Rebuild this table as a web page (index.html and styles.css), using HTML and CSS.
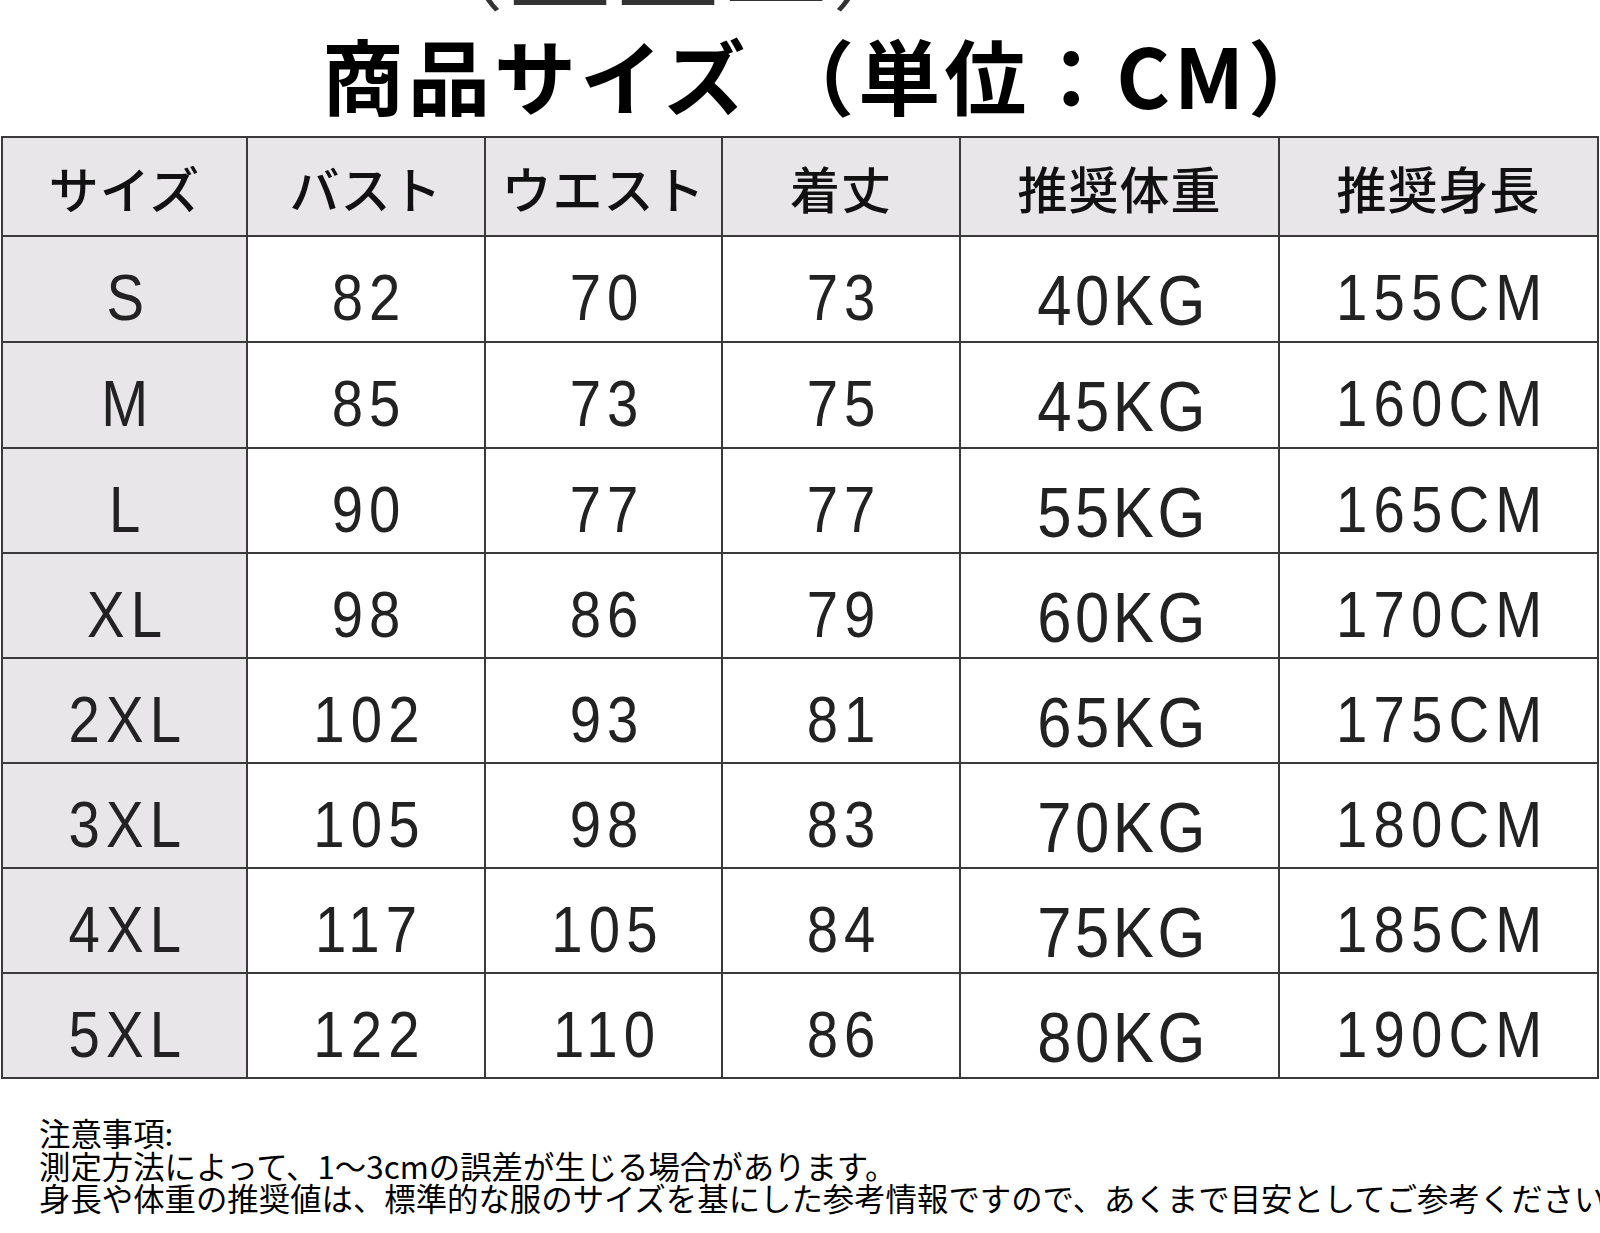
FILE: index.html
```html
<!DOCTYPE html>
<html lang="ja">
<head>
<meta charset="utf-8">
<title>商品サイズ</title>
<link rel="stylesheet" href="styles.css">
</head>
<body>
<div class="page">
  <div class="fragment"><span>（正上工）</span></div>
  <h1 class="title">商品サイズ （単位：CM）</h1>
  <div class="chart">
    <div class="cell head">サイズ</div>
    <div class="cell head">バスト</div>
    <div class="cell head">ウエスト</div>
    <div class="cell head">着丈</div>
    <div class="cell head">推奨体重</div>
    <div class="cell head">推奨身長</div>

    <div class="cell size"><span class="num">S</span></div>
    <div class="cell"><span class="num">82</span></div>
    <div class="cell"><span class="num">70</span></div>
    <div class="cell"><span class="num">73</span></div>
    <div class="cell"><span class="num kg">40KG</span></div>
    <div class="cell"><span class="num">155CM</span></div>

    <div class="cell size"><span class="num">M</span></div>
    <div class="cell"><span class="num">85</span></div>
    <div class="cell"><span class="num">73</span></div>
    <div class="cell"><span class="num">75</span></div>
    <div class="cell"><span class="num kg">45KG</span></div>
    <div class="cell"><span class="num">160CM</span></div>

    <div class="cell size"><span class="num">L</span></div>
    <div class="cell"><span class="num">90</span></div>
    <div class="cell"><span class="num">77</span></div>
    <div class="cell"><span class="num">77</span></div>
    <div class="cell"><span class="num kg">55KG</span></div>
    <div class="cell"><span class="num">165CM</span></div>

    <div class="cell size"><span class="num">XL</span></div>
    <div class="cell"><span class="num">98</span></div>
    <div class="cell"><span class="num">86</span></div>
    <div class="cell"><span class="num">79</span></div>
    <div class="cell"><span class="num kg">60KG</span></div>
    <div class="cell"><span class="num">170CM</span></div>

    <div class="cell size"><span class="num">2XL</span></div>
    <div class="cell"><span class="num">102</span></div>
    <div class="cell"><span class="num">93</span></div>
    <div class="cell"><span class="num">81</span></div>
    <div class="cell"><span class="num kg">65KG</span></div>
    <div class="cell"><span class="num">175CM</span></div>

    <div class="cell size"><span class="num">3XL</span></div>
    <div class="cell"><span class="num">105</span></div>
    <div class="cell"><span class="num">98</span></div>
    <div class="cell"><span class="num">83</span></div>
    <div class="cell"><span class="num kg">70KG</span></div>
    <div class="cell"><span class="num">180CM</span></div>

    <div class="cell size"><span class="num">4XL</span></div>
    <div class="cell"><span class="num">117</span></div>
    <div class="cell"><span class="num">105</span></div>
    <div class="cell"><span class="num">84</span></div>
    <div class="cell"><span class="num kg">75KG</span></div>
    <div class="cell"><span class="num">185CM</span></div>

    <div class="cell size"><span class="num">5XL</span></div>
    <div class="cell"><span class="num">122</span></div>
    <div class="cell"><span class="num">110</span></div>
    <div class="cell"><span class="num">86</span></div>
    <div class="cell"><span class="num kg">80KG</span></div>
    <div class="cell"><span class="num">190CM</span></div>
  </div>
  <div class="notes">
    <p>注意事項:</p>
    <p>測定方法によって、1～3cmの誤差が生じる場合があります。</p>
    <p>身長や体重の推奨値は、標準的な服のサイズを基にした参考情報ですので、あくまで目安としてご参考ください。</p>
  </div>
</div>
</body>
</html>
```

FILE: styles.css
```css
html, body {
  margin: 0;
  padding: 0;
  background: #ffffff;
}

.page {
  width: 1600px;
  height: 1233px;
  overflow: hidden;
  font-family: "Noto Sans CJK JP", sans-serif;
  color: #000;
}

.fragment {
  height: 12px;
  overflow: hidden;
  padding-left: 400px;
  font-size: 104px;
  line-height: 104px;
  font-weight: 300;
  color: #333;
  white-space: nowrap;
}

.fragment span {
  display: block;
  margin-top: -95px;
  letter-spacing: 4px;
}

.title {
  margin: 0;
  height: 124px;
  display: flex;
  align-items: center;
  justify-content: center;
  padding-left: 56px;
  font-size: 82px;
  line-height: 1;
  font-weight: 700;
  letter-spacing: 4px;
  white-space: pre;
  color: #000;
}

.chart {
  box-sizing: border-box;
  width: 1598px;
  margin-left: 1px;
  padding: 2px;
  display: grid;
  grid-template-columns: 243px 236px 235px 236px 317px 317px;
  grid-template-rows: 97px 104px 104px repeat(6, 103px);
  gap: 2px;
  background: #3a3a3a;
}

.cell {
  background: #ffffff;
  display: flex;
  align-items: center;
  justify-content: center;
}

.head,
.size {
  background: #e8e6e9;
}

.head {
  font-size: 50px;
  font-weight: 500;
  color: #111;
  letter-spacing: 1px;
}

.num {
  display: inline-block;
  padding-top: 18px;
  padding-left: 8px;
  font-family: "Liberation Sans", Arial, sans-serif;
  font-size: 64px;
  line-height: 1;
  letter-spacing: 7px;
  color: #222;
  transform: scaleX(0.88);
}

.kg {
  font-size: 70px;
  letter-spacing: 4px;
  padding-top: 24px;
}

.notes {
  margin-top: 38px;
  padding-left: 39px;
  font-size: 31.4px;
  line-height: 32.5px;
  white-space: nowrap;
  color: #000;
}

.notes p {
  margin: 0;
}
```
